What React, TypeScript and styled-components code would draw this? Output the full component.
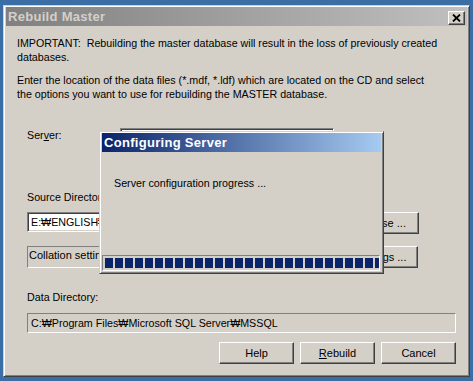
import styled, { createGlobalStyle } from "styled-components";

const GlobalStyle = createGlobalStyle`
  html, body { margin: 0; padding: 0; }
  body {
    width: 473px;
    height: 381px;
    overflow: hidden;
    background: #3a6ea5;
    font-family: "Liberation Sans", Arial, sans-serif;
    font-size: 10.7px;
    color: #000;
  }
`;

const Desktop = styled.div`
  padding: 5px 0 0 3px;
`;

const Window = styled.div`
  position: relative;
  box-sizing: border-box;
  width: 467px;
  height: 372px;
  background: #d4d0c8;
  border: 1px solid;
  border-color: #d4d0c8 #404040 #404040 #d4d0c8;
  box-shadow: inset 1px 1px #fff, inset -1px -1px #808080;
  padding: 1px 2px 2px 2px;
  display: flex;
  flex-direction: column;
`;

const TitleBar = styled.div<{ $active?: boolean }>`
  display: flex;
  align-items: center;
  justify-content: space-between;
  height: 19px;
  padding: 0 2px 0 2px;
  background: ${({ $active }) =>
    $active
      ? "linear-gradient(to right, #0a246a, #a6caf0)"
      : "linear-gradient(to right, #808080, #c0c0c0)"};
  color: ${({ $active }) => ($active ? "#fff" : "#d4d0c8")};
  font-weight: bold;
  font-size: 13px;
  letter-spacing: 0.3px;
`;

const CloseButton = styled.div`
  box-sizing: border-box;
  width: 17px;
  height: 14px;
  margin-top: 2px;
  background: #d4d0c8;
  border: 1px solid;
  border-color: #fff #404040 #404040 #fff;
  box-shadow: inset -1px -1px #808080;
  display: flex;
  align-items: center;
  justify-content: center;
`;

const Body = styled.div`
  padding: 10px 11px 0 11px;
  display: flex;
  flex-direction: column;
`;

const Para = styled.p<{ $top?: number }>`
  margin: ${({ $top }) => $top ?? 0}px 0 0 0;
  line-height: 14px;
`;

const Indent = styled.div`
  padding-left: 10px;
  display: flex;
  flex-direction: column;
`;

const Row = styled.div<{ $top: number; $gap?: number }>`
  display: flex;
  align-items: flex-start;
  gap: ${({ $gap }) => $gap ?? 0}px;
  margin-top: ${({ $top }) => $top}px;
`;

const Label = styled.div<{ $width?: number; $top?: number }>`
  line-height: 14px;
  width: ${({ $width }) => ($width ? `${$width}px` : "auto")};
  margin-top: ${({ $top }) => $top ?? 0}px;
`;

const Combo = styled.div`
  box-sizing: border-box;
  width: 214px;
  height: 21px;
  background: #fff;
  border: 1px solid;
  border-color: #808080 #fff #fff #808080;
  box-shadow: inset 1px 1px #404040, inset -1px -1px #d4d0c8;
`;

const Field = styled.div<{ $width: number; $white?: boolean }>`
  box-sizing: border-box;
  width: ${({ $width }) => $width}px;
  height: 20px;
  padding: 2px 3px;
  line-height: 14px;
  white-space: nowrap;
  overflow: hidden;
  background: ${({ $white }) => ($white ? "#fff" : "#d4d0c8")};
  border: 1px solid;
  border-color: #808080 #fff #fff #808080;
  box-shadow: ${({ $white }) =>
    $white ? "inset 1px 1px #404040, inset -1px -1px #d4d0c8" : "none"};
`;

const StaticBox = styled.div`
  box-sizing: border-box;
  width: 310px;
  height: 22px;
  padding: 1px 1px;
  line-height: 14px;
  font-size: 11px;
  white-space: nowrap;
  overflow: hidden;
  border: 1px solid;
  border-color: #808080 #fff #fff #808080;
`;

const Button = styled.button`
  box-sizing: border-box;
  width: 75px;
  height: 22px;
  padding: 0;
  background: #d4d0c8;
  font-family: inherit;
  font-size: 11px;
  color: #000;
  border: 1px solid;
  border-color: #fff #404040 #404040 #fff;
  box-shadow: inset -1px -1px #808080;
  cursor: default;

  u {
    text-decoration: underline;
  }
`;

const ButtonBar = styled.div`
  display: flex;
  justify-content: flex-end;
  gap: 6px;
  margin-top: 9px;
  width: 429px;
`;

const Dialog = styled.div`
  position: absolute;
  left: 95px;
  top: 125px;
  box-sizing: border-box;
  width: 285px;
  height: 143px;
  background: #d4d0c8;
  border: 1px solid;
  border-color: #d4d0c8 #404040 #404040 #d4d0c8;
  box-shadow: inset 1px 1px #fff, inset -1px -1px #808080;
  padding: 1px 2px 2px 2px;
  display: flex;
  flex-direction: column;
`;

const DialogText = styled.div`
  margin: 24px 0 0 12px;
  line-height: 14px;
`;

const Progress = styled.div`
  box-sizing: border-box;
  margin-top: auto;
  margin-right: 1px;
  height: 16px;
  padding: 2px;
  display: flex;
  gap: 2px;
  overflow: hidden;
  border: 1px solid;
  border-color: #808080 #fff #fff #808080;
`;

const Block = styled.div`
  flex: 0 0 8px;
  height: 10px;
  background: #0a246a;
`;

const CloseIcon = () => (
  <svg width="9" height="8" viewBox="0 0 9 8">
    <path d="M1 0.5 L8 7.5 M8 0.5 L1 7.5" stroke="#000" strokeWidth="1.8" />
  </svg>
);

export default function App() {
  const blocks = Array.from({ length: 28 });
  return (
    <>
      <GlobalStyle />
      <Desktop>
        <Window>
          <TitleBar>
            <span>Rebuild Master</span>
            <CloseButton>
              <CloseIcon />
            </CloseButton>
          </TitleBar>
          <Body>
            <Para>
              IMPORTANT:&nbsp; Rebuilding the master database will result in the loss of previously created
              <br />
              databases.
            </Para>
            <Para $top={9}>
              Enter the location of the data files (*.mdf, *.ldf) which are located on the CD and select
              <br />
              the options you want to use for rebuilding the MASTER database.
            </Para>
            <Indent>
              <Row $top={27}>
                <Label $width={93}>
                  Ser<u>v</u>er:
                </Label>
                <Combo />
              </Row>
              <Label $top={41}>Source Directory:</Label>
              <Row $top={8} $gap={7}>
                <Field $width={310} $white>
                  E:₩ENGLISH₩X86₩DATA
                </Field>
                <Button>Browse ...</Button>
              </Row>
              <Row $top={12} $gap={6}>
                <StaticBox>Collation settings</StaticBox>
                <Button>Settings ...</Button>
              </Row>
              <Label $top={22}>Data Directory:</Label>
              <Row $top={9}>
                <Field $width={429}>C:₩Program Files₩Microsoft SQL Server₩MSSQL</Field>
              </Row>
              <ButtonBar>
                <Button>Help</Button>
                <Button>
                  <u>R</u>ebuild
                </Button>
                <Button>Cancel</Button>
              </ButtonBar>
            </Indent>
          </Body>
          <Dialog>
            <TitleBar $active>
              <span>Configuring Server</span>
            </TitleBar>
            <DialogText>Server configuration progress ...</DialogText>
            <Progress>
              {blocks.map((_, i) => (
                <Block key={i} />
              ))}
            </Progress>
          </Dialog>
        </Window>
      </Desktop>
    </>
  );
}
